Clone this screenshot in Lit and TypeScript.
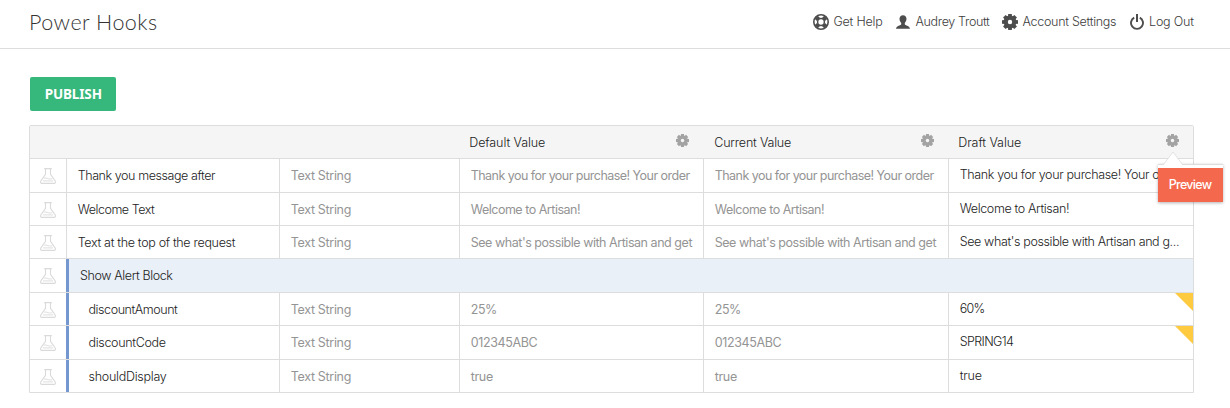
import { LitElement, html, svg, css, nothing } from "lit";
import { customElement, property } from "lit/decorators.js";
import { classMap } from "lit/directives/class-map.js";

const ctx = document.createElement("canvas").getContext("2d")!;

/** A single line label whose tracking is computed so that its ink spans `width` px. */
@customElement("fit-label")
class FitLabel extends LitElement {
  @property() text = "";
  @property({ type: Number }) width = 0;
  @property() font = "300 12.5px Inter";
  static styles = css`
    :host { display: inline-block; white-space: nowrap; }
    .t { display: block; font-kerning: normal; }
  `;
  render() {
    ctx.font = this.font;
    const m = ctx.measureText(this.text);
    const ink = m.actualBoundingBoxRight + m.actualBoundingBoxLeft;
    const ls = (this.width - ink) / Math.max(1, this.text.length - 1);
    return html`<span class="t" style="font:${this.font}, sans-serif;line-height:inherit;letter-spacing:${ls.toFixed(3)}px;margin-left:${m.actualBoundingBoxLeft.toFixed(2)}px">${this.text}</span>`;
  }
}

const teeth = [0, 45, 90, 135, 180, 225, 270, 315];
const gear = (cls: string) => html`<svg class=${cls} viewBox="0 0 16 16">
  <g fill="currentColor">${teeth.map(a => svg`<path d="M6.200 0h3.600l.3 3.200H5.900z" transform="rotate(${a} 8 8)"/>`)}</g>
  <circle cx="8" cy="8" r="4.300" fill="none" stroke="currentColor" stroke-width="4.200"/></svg>`;

const lifebuoy = html`<svg class="ico" viewBox="0 0 16 16" fill="none" stroke="currentColor">
  <circle cx="8" cy="8" r="7.200" stroke-width="1.600"/><circle cx="8" cy="8" r="3.400" stroke-width="1.500"/>
  <g stroke-width="4.400"><path d="M3.200 3.200l2.300 2.300M12.800 3.200l-2.300 2.300M3.200 12.800l2.300-2.300M12.800 12.800l-2.300-2.300"/></g></svg>`;

const person = html`<svg class="ico person" viewBox="0 0 14 14" fill="currentColor">
  <path d="M7 .2C4.900.2 3.500 1.700 3.500 3.800c0 1.700.7 3.200 1.700 4.100v1.300C5 10.500.2 10.500 0 13.800h14c-.2-3.300-5-3.300-5.200-4.600V7.900c1-.9 1.700-2.400 1.700-4.100C10.500 1.700 9.100.2 7 .2z"/></svg>`;

const power = html`<svg class="ico power" viewBox="0 0 14 16" fill="none" stroke="currentColor">
  <path d="M4.200 3.600A6 6 0 1 0 9.800 3.600" stroke-width="1.900"/><path d="M7 0v8" stroke-width="2"/></svg>`;

const flask = html`<svg class="flask" viewBox="0 0 16 16" fill="none" stroke="#dadada">
  <path d="M4.200.6h7.600M5.500.8v5.500L.8 13c-.5 1.400-.1 2.400 1 2.400h12.400c1.100 0 1.500-1 1-2.400L10.500 6.300V.8" stroke-width="1.100"/>
  <path d="M3.800 10.200c1.500-.5 3 0 4.300.5s2.800.4 4.200-.2M3 12.900h10" stroke-width=".9"/></svg>`;

type Cell = [string, number];
interface Row { name: Cell; def?: Cell; draft?: Cell; group?: boolean; child?: boolean; tall?: boolean; flag?: boolean; }
const rows: Row[] = [
  { name: ["Thank you message after", 138.4], def: ["Thank you for your purchase! Your order", 219.7], draft: ["Thank you for your purchase! Your order", 222.7], tall: true },
  { name: ["Welcome Text", 77.4], def: ["Welcome to Artisan!", 109.3], draft: ["Welcome to Artisan!", 109.3] },
  { name: ["Text at the top of the request", 158], def: ["See what's possible with Artisan and get", 221.7], draft: ["See what's possible with Artisan and g...", 219.2] },
  { name: ["Show Alert Block", 93.3], group: true, tall: true },
  { name: ["discountAmount", 89.6], def: ["25%", 25.4], draft: ["60%", 24.7], child: true, flag: true },
  { name: ["discountCode", 77.2], def: ["012345ABC", 66.8], draft: ["SPRING14", 54.4], child: true, flag: true, tall: true },
  { name: ["shouldDisplay", 78.3], def: ["true", 22.2], draft: ["true", 22], child: true },
];
const muted = "400 12.5px Inter";
const label = (c: Cell, font = "300 12.5px Inter") =>
  html`<fit-label .text=${c[0]} .width=${c[1]} .font=${font}></fit-label>`;

@customElement("app-root")
class AppRoot extends LitElement {
  static styles = css`
    :host { display: block; height: 408px; overflow: hidden; background: #fff; color: #222; font-family: Inter, sans-serif; box-sizing: border-box; }
    svg { display: block; flex: none; }
    header { display: flex; height: 48px; border-bottom: 1px solid #ddd; padding: 0 36px 0 31px; justify-content: space-between; }
    .title { line-height: 44px; color: #333; }
    nav { display: flex; height: 43px; line-height: 43px; color: #3c3c3c; }
    .item { display: flex; align-items: center; }
    .ico { width: 16px; height: 16px; color: #4d4d4d; }
    .person { width: 14px; height: 14px; }
    .power { width: 14px; }
    .i1 { width: 83px; gap: 4.500px; } .i2 { width: 106px; gap: 5.500px; } .i3 { width: 128px; gap: 4.500px; } .i4 { width: 64px; gap: 6px; }
    main { padding: 28px 36px 0 29px; }
    .publish { display: flex; justify-content: center; width: 86px; height: 34px; margin: 0 0 14px 1px; padding: 0 0 0 1.500px; border: 0; border-radius: 2px; background: #36b77b; color: #fff; line-height: 34px; }
    .table { border: 1px solid #ddd; border-radius: 2px 2px 0 0; }
    .row { display: grid; grid-template-columns: 36px 213px 180px 244px 245px 245px; height: 32px; border-top: 1px solid #ddd; line-height: 33px; }
    .row.tall { height: 33px; }
    .head { border-top: 0; background: #f5f5f5; line-height: 34px; }
    .cell { display: flex; border-left: 1px solid #ddd; overflow: hidden; padding-left: 10.700px; color: #949494; }
    .head .cell { border-color: transparent; color: #222; padding-left: 10.300px; justify-content: space-between; padding-right: 14px; }
    .head .cell.last { position: relative; overflow: visible; }
    .icon { padding: 9px 0 0 10px; }
    .flask { width: 16px; height: 16px; }
    .cell.name { color: #222; }
    .child .name, .group .name { border-left: 3px solid #7597cf; }
    .child .name { padding-left: 19.500px; }
    .group .name { grid-column: 2 / 7; background: #e9f0f8; padding-left: 11px; }
    .cell.draft { color: #222; line-height: 31px; justify-content: space-between; }
    .flag { flex: none; width: 18px; height: 18px; background: #fdca40; clip-path: polygon(0 0, 100% 0, 100% 100%); }
    .gear { width: 13px; height: 13px; margin-top: 8px; color: #a3a3a3; }
    .menu { position: absolute; z-index: 2; top: 38px; left: 209px; width: 65px; height: 38px; }
    .panel { box-sizing: border-box; height: 38px; padding-top: 3px; background: #fff; border-top: 1px solid #ddd; box-shadow: 0 1px 3px rgba(0,0,0,.3); }
    .opt { height: 34px; line-height: 34px; background: #f4694d; color: #fff; display: flex; justify-content: center; }
    .arrow { position: absolute; left: 5px; top: -13px; width: 20px; height: 15px; }
  `;
  render() {
    const nav = "300 12.5px Inter";
    return html`
      <header>
        <div class="title">${label(["Power Hooks", 126.5], "300 21.5px Lato")}</div>
        <nav>
          <div class="item i1">${lifebuoy}${label(["Get Help", 48.7], nav)}</div>
          <div class="item i2">${person}${label(["Audrey Troutt", 74.6], nav)}</div>
          <div class="item i3">${gear("ico")}${label(["Account Settings", 93.6], nav)}</div>
          <div class="item i4">${power}${label(["Log Out", 44.3], nav)}</div>
        </nav>
      </header>
      <main>
        <button class="publish">${label(["PUBLISH", 56], "700 13.5px 'Noto Sans'")}</button>
        <div class="table">
          <div class="row head">
            <div></div><div></div><div></div>
            <div class="cell">${label(["Default Value", 74.7])}${gear("gear")}</div>
            <div class="cell">${label(["Current Value", 76.7])}${gear("gear")}</div>
            <div class="cell last">${label(["Draft Value", 61.7])}${gear("gear")}
              <div class="menu">
                <div class="panel"><div class="opt">${label(["Preview", 43], "500 12.5px Inter")}</div></div>
                <svg class="arrow" viewBox="0 0 20 15"><path d="M.5 14L10 1l9.500 13v1H.5z" fill="#fff"/><path d="M.5 13.500L10 1l9.500 12.500" fill="none" stroke="#ddd" stroke-width=".8"/></svg>
              </div>
            </div>
          </div>
          ${rows.map(r => html`
            <div class="row ${classMap({ tall: !!r.tall, group: !!r.group, child: !!r.child })}">
              <div class="icon">${flask}</div>
              <div class="cell name">${label(r.name)}</div>
              ${r.group ? nothing : html`
                <div class="cell">${label(["Text String", 60], muted)}</div>
                <div class="cell">${label(r.def!, muted)}</div>
                <div class="cell">${label(r.def!, muted)}</div>
                <div class="cell draft">${label(r.draft!)}${r.flag ? html`<span class="flag"></span>` : nothing}</div>`}
            </div>`)}
        </div>
      </main>`;
  }
}
